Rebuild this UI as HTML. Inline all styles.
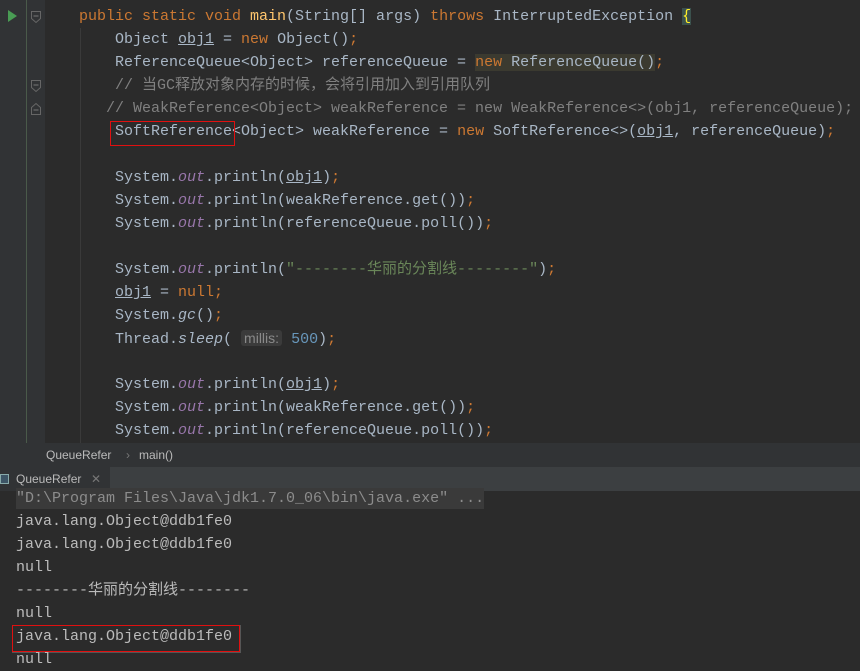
<!DOCTYPE html>
<html><head><meta charset="utf-8"><style>
*{margin:0;padding:0;box-sizing:border-box}
body{width:860px;height:670px;overflow:hidden;background:#2b2b2b;font-family:"Liberation Mono","Noto Sans CJK SC",monospace;font-size:15px;color:#a9b7c6;position:relative}
.gut{position:absolute;left:0;top:0;width:45px;height:443px;background:#313335}
.gl{position:absolute;left:26px;top:0;width:1px;height:443px;background:#4a5a4a}
.l{position:absolute;white-space:pre;height:23px;line-height:23px}
.k{color:#cc7832}.c{color:#808080}.s{color:#6a8759}.n{color:#6897bb}.f{color:#9876aa;font-style:italic}.i{font-style:italic}.m{color:#ffc66d}
.u{text-decoration:underline}
.hint{background:#3b3b3b;color:#8a8a8a;font-family:"Liberation Sans",sans-serif;font-size:14px;border-radius:3px;padding:0 3px}
.bc{position:absolute;left:0;top:443px;width:860px;height:24px;background:#313335;font-family:"Liberation Sans",sans-serif;font-size:12px;color:#bbb;line-height:24px}
.tb{position:absolute;left:0;top:467px;width:860px;height:24px;background:#3c3f41;font-family:"Liberation Sans",sans-serif;font-size:12px;color:#bbb;line-height:24px}
.con{color:#bbbbbb}
.fold{position:absolute;left:30px;width:12px;height:14px}
</style></head><body>
<div class="gut"></div><div class="gl"></div>
<div style="position:absolute;left:8px;top:10px;width:0;height:0;border-top:6px solid transparent;border-bottom:6px solid transparent;border-left:9px solid #499c54"></div>
<svg class="fold" style="top:10px" viewBox="0 0 12 14"><path d="M1.5 1.5h9v7l-4.5 4-4.5-4z" fill="none" stroke="#666"/><path d="M3.5 6h5" stroke="#777"/></svg>
<svg class="fold" style="top:79px" viewBox="0 0 12 14"><path d="M1.5 1.5h9v7l-4.5 4-4.5-4z" fill="none" stroke="#666"/><path d="M3.5 6h5" stroke="#777"/></svg>
<svg class="fold" style="top:102px" viewBox="0 0 12 14"><path d="M1.5 12.5h9v-7l-4.5-4-4.5 4z" fill="none" stroke="#666"/><path d="M3.5 8h5" stroke="#777"/></svg>
<div style="position:absolute;left:80px;top:28px;width:1px;height:415px;background:#3a3a3a"></div>

<div class="l" style="left:79px;top:5px"><span class="k">public static void </span><span class="m">main</span>(String[] args) <span class="k">throws </span>InterruptedException <span style="color:#ffef28;background:#3b514d">{</span></div>
<div class="l" style="left:115px;top:28px">Object <span class="u">obj1</span> = <span class="k">new </span>Object()<span class="k">;</span></div>
<div class="l" style="left:115px;top:51px">ReferenceQueue&lt;Object&gt; referenceQueue = <span style="background:#3b3a30"><span class="k">new </span>ReferenceQueue()</span><span class="k">;</span></div>
<div class="l c" style="left:115px;top:74px">// 当GC释放对象内存的时候，会将引用加入到引用队列</div>
<div class="l c" style="left:106px;top:97px">// WeakReference&lt;Object&gt; weakReference = new WeakReference&lt;&gt;(obj1, referenceQueue);</div>
<div class="l" style="left:115px;top:120px">SoftReference&lt;Object&gt; weakReference = <span class="k">new </span>SoftReference&lt;&gt;(<span class="u">obj1</span>, referenceQueue)<span class="k">;</span></div>
<div style="position:absolute;left:110px;top:121px;width:125px;height:25px;border:1px solid #e01010"></div>
<div class="l" style="left:115px;top:166px">System.<span class="f">out</span>.println(<span class="u">obj1</span>)<span class="k">;</span></div>
<div class="l" style="left:115px;top:189px">System.<span class="f">out</span>.println(weakReference.get())<span class="k">;</span></div>
<div class="l" style="left:115px;top:212px">System.<span class="f">out</span>.println(referenceQueue.poll())<span class="k">;</span></div>
<div class="l" style="left:115px;top:258px">System.<span class="f">out</span>.println(<span class="s">"--------华丽的分割线--------"</span>)<span class="k">;</span></div>
<div class="l" style="left:115px;top:281px"><span class="u">obj1</span> = <span class="k">null;</span></div>
<div class="l" style="left:115px;top:304px">System.<span class="i">gc</span>()<span class="k">;</span></div>
<div class="l" style="left:115px;top:327px">Thread.<span class="i">sleep</span>( <span class="hint">millis:</span> <span class="n">500</span>)<span class="k">;</span></div>
<div class="l" style="left:115px;top:373px">System.<span class="f">out</span>.println(<span class="u">obj1</span>)<span class="k">;</span></div>
<div class="l" style="left:115px;top:396px">System.<span class="f">out</span>.println(weakReference.get())<span class="k">;</span></div>
<div class="l" style="left:115px;top:419px">System.<span class="f">out</span>.println(referenceQueue.poll())<span class="k">;</span></div>

<div class="bc"><span style="position:absolute;left:46px">QueueRefer</span><span style="position:absolute;left:126px;color:#777">›</span><span style="position:absolute;left:139px">main()</span></div>
<div class="tb"><div style="position:absolute;left:0;top:0;width:110px;height:24px;background:#313335"></div>
<div style="position:absolute;left:0;top:7px;width:9px;height:10px;border:1px solid #8aa;background:#3d5566"></div>
<span style="position:absolute;left:16px">QueueRefer</span><span style="position:absolute;left:91px;color:#777">✕</span></div>

<div style="position:absolute;left:16px;top:488px;width:468px;height:21px;background:#3a3a3a"></div>
<div class="l" style="left:16px;top:487px;color:#8c8c8c">"D:\Program Files\Java\jdk1.7.0_06\bin\java.exe" ...</div>
<div class="l con" style="left:16px;top:510px">java.lang.Object@ddb1fe0</div>
<div class="l con" style="left:16px;top:533px">java.lang.Object@ddb1fe0</div>
<div class="l con" style="left:16px;top:556px">null</div>
<div class="l con" style="left:16px;top:579px">--------华丽的分割线--------</div>
<div class="l con" style="left:16px;top:602px">null</div>
<div style="position:absolute;left:12px;top:625px;width:229px;height:28px;border:1px solid #555"></div>
<div style="position:absolute;left:12px;top:625px;width:228px;height:27px;border:1px solid #e01010"></div>
<div class="l con" style="left:16px;top:625px">java.lang.Object@ddb1fe0</div>
<div class="l con" style="left:16px;top:648px">null</div>
</body></html>
